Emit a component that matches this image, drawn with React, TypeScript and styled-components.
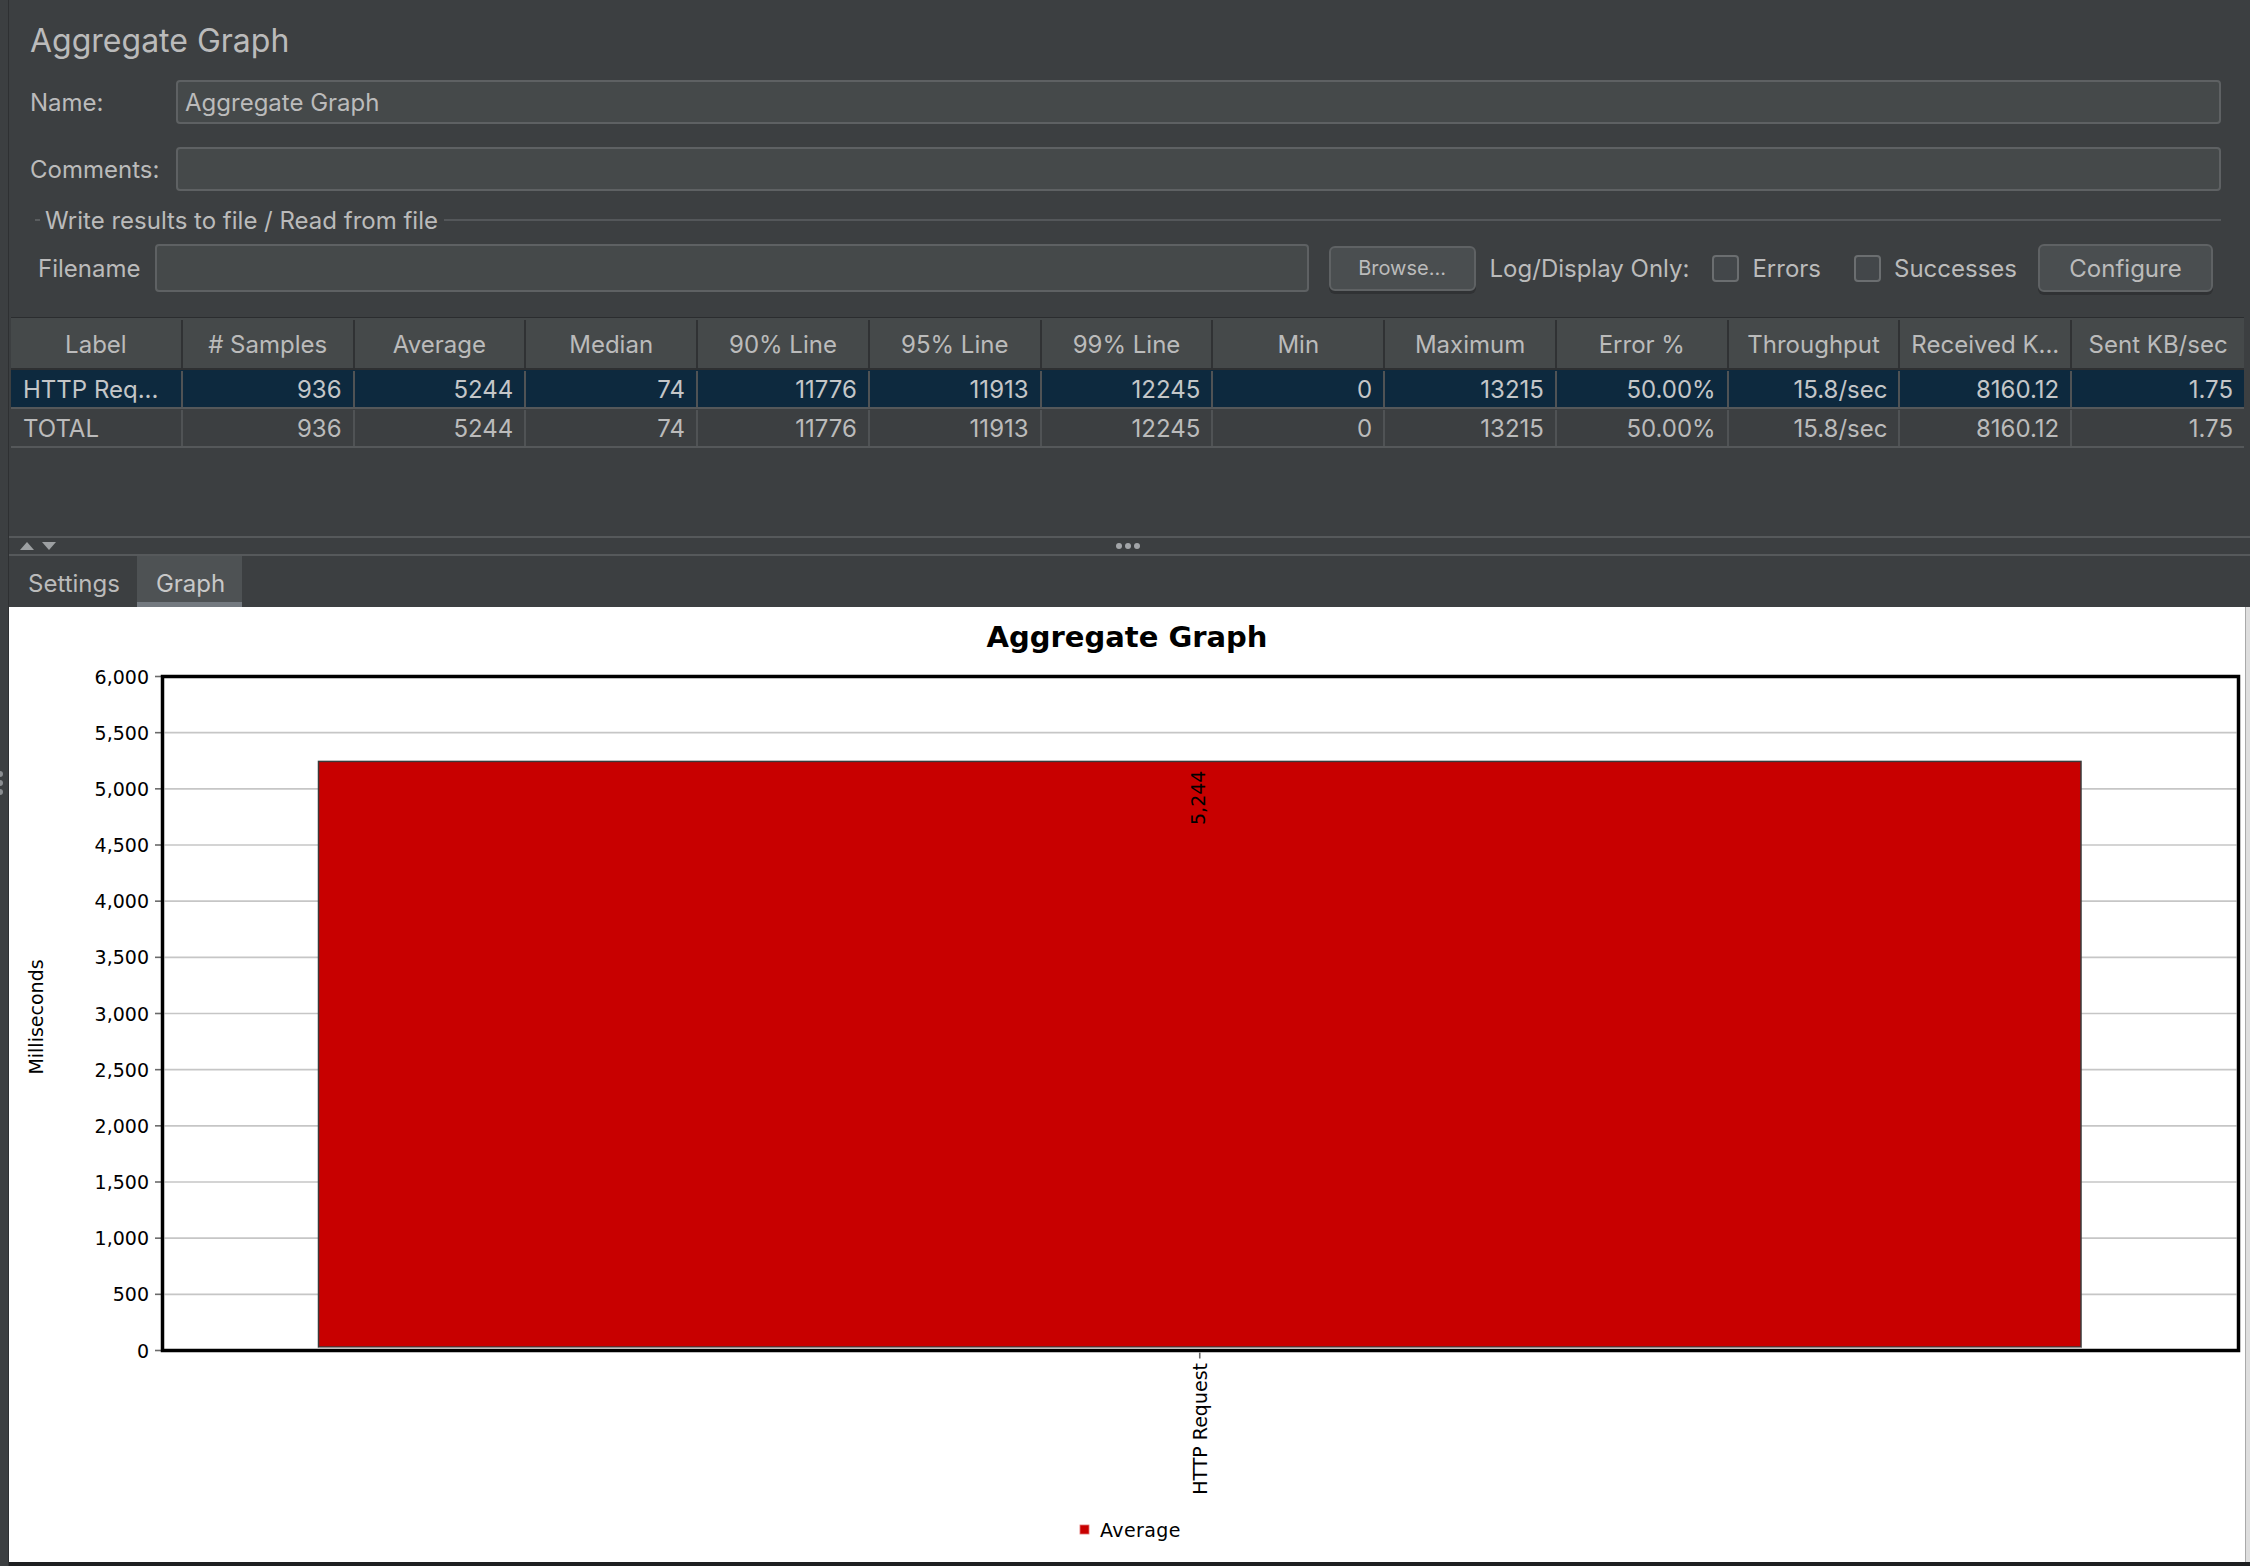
import React from "react";
import styled, { createGlobalStyle } from "styled-components";

const GlobalStyle = createGlobalStyle`
    html, body {
        margin: 0;
        padding: 0;
        background: #3c3f41;
    }
    #root {
        width: 2250px;
        height: 1566px;
    }
`;

const Window = styled.div`
    display: flex;
    width: 2250px;
    height: 1566px;
    overflow: hidden;
    background: #3c3f41;
    color: #bbbbbb;
    font-family: Inter, "Noto Sans", sans-serif;
`;

const LeftGutter = styled.div`
    width: 8px;
    flex-shrink: 0;
    border-right: 1px solid #2e3032;
    display: flex;
    flex-direction: column;
    justify-content: center;
    overflow: hidden;
`;

const GripDot = styled.span`
    width: 6px;
    height: 6px;
    border-radius: 50%;
    background: #8a8d90;
    margin: 1.5px 0 1.5px -3px;
`;

const Main = styled.div`
    flex: 1;
    min-width: 0;
    display: flex;
    flex-direction: column;
`;

const TopPanel = styled.div`
    padding: 0 29px 0 21px;
`;

const PanelTitle = styled.div`
    margin: 19px 0 17px;
    height: 44px;
    line-height: 44px;
    font-size: 32px;
`;

const FormRow = styled.div`
    display: flex;
    align-items: center;
    height: 44px;
    & + & {
        margin-top: 23px;
    }
`;

const FieldLabel = styled.div<{ $width: number }>`
    width: ${(p) => p.$width}px;
    flex-shrink: 0;
    font-size: 24px;
`;

const TextField = styled.div`
    flex: 1;
    height: 100%;
    box-sizing: border-box;
    display: flex;
    align-items: center;
    padding: 0 7px;
    background: #45494a;
    border: 2px solid #5e6163;
    border-radius: 4px;
    font-size: 24px;
    color: #bbbbbb;
`;

const GroupHeader = styled.div`
    display: flex;
    align-items: center;
    height: 30px;
    margin-top: 14px;
    padding-left: 5px;
`;

const GroupDash = styled.span`
    width: 5px;
    height: 2px;
    background: #5a5d5f;
`;

const GroupTitle = styled.span`
    margin: 0 6px 0 5px;
    font-size: 24px;
`;

const GroupLine = styled.span`
    flex: 1;
    height: 2px;
    background: #54575a;
`;

const FileRow = styled.div`
    display: flex;
    align-items: center;
    height: 48px;
    margin-top: 9px;
    padding: 0 8px 0 8px;
`;

const Button = styled.div<{ $width: number; $height: number; $gap: number; $small?: boolean }>`
    width: ${(p) => p.$width}px;
    height: ${(p) => p.$height}px;
    margin-left: ${(p) => p.$gap}px;
    flex-shrink: 0;
    box-sizing: border-box;
    display: flex;
    align-items: center;
    justify-content: center;
    background: #4a4e50;
    border: 2px solid #5f6264;
    border-radius: 6px;
    box-shadow: 0 3px 0 #303234;
    font-size: ${(p) => (p.$small ? 20 : 24)}px;
    color: #bbbbbb;
`;

const InlineText = styled.span<{ $gap: number }>`
    margin-left: ${(p) => p.$gap}px;
    font-size: 24px;
    white-space: nowrap;
`;

const CheckOption = styled.label<{ $gap: number }>`
    display: flex;
    align-items: center;
    gap: 13px;
    margin-left: ${(p) => p.$gap}px;
    font-size: 24px;
`;

const CheckBox = styled.span`
    width: 27px;
    height: 27px;
    box-sizing: border-box;
    background: #43474a;
    border: 2px solid #6b6e70;
    border-radius: 4px;
`;

const TableArea = styled.div`
    height: 219px;
    margin: 25px 6px 0 2px;
    display: flex;
    flex-direction: column;
`;

const HeaderRow = styled.div`
    display: grid;
    grid-template-columns: repeat(13, 1fr);
    height: 53px;
    box-sizing: border-box;
    padding-top: 2px;
    background: #45494a;
    border-top: 1px solid #2b2d2f;
    border-bottom: 2px solid #2e3032;
`;

const HeaderCell = styled.div`
    display: flex;
    align-items: center;
    justify-content: center;
    border-right: 2px solid #303234;
    font-size: 24px;
    white-space: nowrap;
    overflow: hidden;
    &:last-child {
        border-right: none;
    }
`;

const BodyRow = styled.div<{ $selected?: boolean }>`
    display: grid;
    grid-template-columns: repeat(13, 1fr);
    height: 39px;
    box-sizing: border-box;
    padding-top: 1px;
    background: ${(p) => (p.$selected ? "#0d293e" : "transparent")};
    border-bottom: 2px solid #55585a;
    color: ${(p) => (p.$selected ? "#c4c6c8" : "#bbbbbb")};
`;

const BodyCell = styled.div<{ $left?: boolean }>`
    display: flex;
    align-items: center;
    justify-content: ${(p) => (p.$left ? "flex-start" : "flex-end")};
    padding: 0 11px 0 12px;
    border-right: 2px solid #505355;
    font-size: 24px;
    white-space: nowrap;
    overflow: hidden;
    &:last-child {
        border-right: none;
    }
`;

const TableFiller = styled.div`
    flex: 1;
`;

const Splitter = styled.div`
    height: 20px;
    box-sizing: border-box;
    border-top: 2px solid #56595b;
    border-bottom: 2px solid #56595b;
    display: grid;
    grid-template-columns: 1fr auto 1fr;
    align-items: center;
`;

const SplitArrows = styled.div`
    display: flex;
    align-items: center;
    gap: 8px;
    padding-left: 11px;
`;

const Arrow = styled.span<{ $down?: boolean }>`
    width: 0;
    height: 0;
    border-left: 7px solid transparent;
    border-right: 7px solid transparent;
    ${(p) =>
        p.$down
            ? "border-top: 8px solid #9da0a2;"
            : "border-bottom: 8px solid #9da0a2;"}
`;

const SplitDots = styled.div`
    display: flex;
    gap: 3px;
    margin-right: 4px;
`;

const SplitDot = styled.span`
    width: 6px;
    height: 6px;
    border-radius: 50%;
    background: #a2a5a8;
`;

const TabStrip = styled.div`
    display: flex;
    height: 51px;
`;

const Tab = styled.div<{ $active?: boolean }>`
    display: flex;
    align-items: center;
    padding: 4px 17px 0 19px;
    font-size: 24px;
    color: ${(p) => (p.$active ? "#c8c8c8" : "#bbbbbb")};
    background: ${(p) => (p.$active ? "#4e5254" : "transparent")};
    box-shadow: ${(p) => (p.$active ? "inset 0 -5px 0 #747a80" : "none")};
`;

const ChartRow = styled.div`
    flex: 1;
    display: flex;
    min-height: 0;
`;

const ChartPanel = styled.div`
    width: 2236px;
    flex-shrink: 0;
    background: #ffffff;
    overflow: hidden;
`;

const EdgeStrip = styled.div`
    flex: 1;
    background: #dedede;
    border-left: 1px solid #a9a9a9;
`;

const StatusStrip = styled.div`
    height: 4px;
    flex-shrink: 0;
    background: #1e1f21;
`;

const ChartSvg = styled.svg`
    display: block;
    text {
        font-family: "DejaVu Sans", "Liberation Sans", sans-serif;
        font-size: 19px;
        fill: #000000;
    }
    .chart-title {
        font-size: 29px;
        font-weight: bold;
    }
`;

const COLUMNS = [
    "Label",
    "# Samples",
    "Average",
    "Median",
    "90% Line",
    "95% Line",
    "99% Line",
    "Min",
    "Maximum",
    "Error %",
    "Throughput",
    "Received K...",
    "Sent KB/sec",
];

const STATS = ["936", "5244", "74", "11776", "11913", "12245", "0", "13215", "50.00%", "15.8/sec", "8160.12", "1.75"];

const ROWS = [
    { label: "HTTP Req...", values: STATS, selected: true },
    { label: "TOTAL", values: STATS, selected: false },
];

// plot geometry, in chart panel coordinates
const PLOT = { left: 153.5, top: 69.5, right: 2229.5, bottom: 743.5 };
const MAX_VALUE = 6000;
const AVERAGE = 5244;
const BAR = { left: 309.5, right: 2072 };

function yFor(value: number) {
    return PLOT.bottom - (value / MAX_VALUE) * (PLOT.bottom - PLOT.top);
}

function AggregateChart() {
    const ticks: number[] = [];
    for (let v = 0; v <= MAX_VALUE; v += 500) ticks.push(v);
    const barTop = yFor(AVERAGE);
    const barCenter = (BAR.left + BAR.right) / 2;

    return (
        <ChartSvg width={2236} height={955} viewBox="0 0 2236 955">
            <text className="chart-title" x={1118} y={40} textAnchor="middle">
                Aggregate Graph
            </text>

            {ticks.map((v) => (
                <g key={v}>
                    {v > 0 && v < MAX_VALUE && (
                        <line x1={PLOT.left + 2} x2={PLOT.right - 2} y1={yFor(v)} y2={yFor(v)} stroke="#c6c6c6" strokeWidth={1.6} />
                    )}
                    <line x1={146} x2={152} y1={yFor(v)} y2={yFor(v)} stroke="#6a6a6a" strokeWidth={1.6} />
                    <text x={140} y={yFor(v) + 7} textAnchor="end">
                        {v.toLocaleString("en-US")}
                    </text>
                </g>
            ))}

            <rect
                x={BAR.left}
                y={barTop}
                width={BAR.right - BAR.left}
                height={PLOT.bottom - 3.5 - barTop}
                fill="#c80000"
                stroke="#3a3a3a"
                strokeWidth={1.5}
            />
            <line x1={BAR.left} x2={BAR.right} y1={PLOT.bottom - 2.2} y2={PLOT.bottom - 2.2} stroke="#ffffff" strokeWidth={1.2} />

            <rect
                x={PLOT.left}
                y={PLOT.top}
                width={PLOT.right - PLOT.left}
                height={PLOT.bottom - PLOT.top}
                fill="none"
                stroke="#000000"
                strokeWidth={3.5}
            />

            <text transform={`translate(${barCenter + 5} 218) rotate(-90)`} textAnchor="start">
                {AVERAGE.toLocaleString("en-US")}
            </text>

            <line x1={barCenter} x2={barCenter} y1={PLOT.bottom + 2} y2={PLOT.bottom + 8} stroke="#6a6a6a" strokeWidth={1.6} />
            <text transform={`translate(${barCenter + 7} 756) rotate(-90)`} textAnchor="end">
                HTTP Request
            </text>

            <text transform="translate(34 410) rotate(-90)" textAnchor="middle">
                Milliseconds
            </text>

            <rect x={1071} y={918} width={9} height={9} fill="#c80000" stroke="#e07070" strokeWidth={0.8} />
            <text x={1091} y={930} letterSpacing={0.4}>
                Average
            </text>
        </ChartSvg>
    );
}

export default function App(): JSX.Element {
    return (
        <>
            <GlobalStyle />
            <Window>
                <LeftGutter>
                    <GripDot />
                    <GripDot />
                    <GripDot />
                </LeftGutter>

                <Main>
                    <TopPanel>
                        <PanelTitle>Aggregate Graph</PanelTitle>
                        <FormRow>
                            <FieldLabel $width={146}>Name:</FieldLabel>
                            <TextField>Aggregate Graph</TextField>
                        </FormRow>
                        <FormRow>
                            <FieldLabel $width={146}>Comments:</FieldLabel>
                            <TextField />
                        </FormRow>

                        <GroupHeader>
                            <GroupDash />
                            <GroupTitle>Write results to file / Read from file</GroupTitle>
                            <GroupLine />
                        </GroupHeader>

                        <FileRow>
                            <FieldLabel $width={117}>Filename</FieldLabel>
                            <TextField />
                            <Button $width={147} $height={45} $gap={20} $small>
                                Browse...
                            </Button>
                            <InlineText $gap={14}>Log/Display Only:</InlineText>
                            <CheckOption $gap={23}>
                                <CheckBox />
                                Errors
                            </CheckOption>
                            <CheckOption $gap={33}>
                                <CheckBox />
                                Successes
                            </CheckOption>
                            <Button $width={175} $height={48} $gap={21}>
                                Configure
                            </Button>
                        </FileRow>
                    </TopPanel>

                    <TableArea>
                        <HeaderRow>
                            {COLUMNS.map((c) => (
                                <HeaderCell key={c}>{c}</HeaderCell>
                            ))}
                        </HeaderRow>
                        {ROWS.map((row) => (
                            <BodyRow key={row.label} $selected={row.selected}>
                                <BodyCell $left>{row.label}</BodyCell>
                                {row.values.map((v, i) => (
                                    <BodyCell key={i}>{v}</BodyCell>
                                ))}
                            </BodyRow>
                        ))}
                        <TableFiller />
                    </TableArea>

                    <Splitter>
                        <SplitArrows>
                            <Arrow />
                            <Arrow $down />
                        </SplitArrows>
                        <SplitDots>
                            <SplitDot />
                            <SplitDot />
                            <SplitDot />
                        </SplitDots>
                        <span />
                    </Splitter>

                    <TabStrip>
                        <Tab>Settings</Tab>
                        <Tab $active>Graph</Tab>
                    </TabStrip>

                    <ChartRow>
                        <ChartPanel>
                            <AggregateChart />
                        </ChartPanel>
                        <EdgeStrip />
                    </ChartRow>
                    <StatusStrip />
                </Main>
            </Window>
        </>
    );
}
